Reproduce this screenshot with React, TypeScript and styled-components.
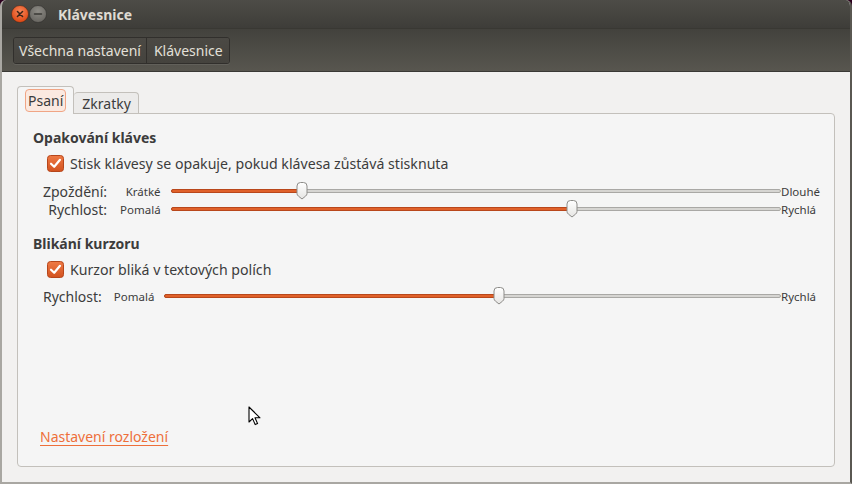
import React from "react"
import styled, { createGlobalStyle } from "styled-components"

const Global = createGlobalStyle`
  html, body { margin: 0; padding: 0; background: #2c001e; }
  body { font-family: "Noto Sans", "Open Sans", sans-serif; }
`

const Window = styled.div`
  position: relative;
  width: 852px;
  height: 484px;
  display: flex;
  flex-direction: column;
  background: #f2f1f0;
  border-radius: 6px 6px 0 0;
  overflow: hidden;
  box-sizing: border-box;
  border-left: 2px solid #a9a7a2;
  border-right: 2px solid #5a5852;
  border-bottom: 2px solid #a9a7a2;
`

const TitleBar = styled.div`
  height: 28px;
  display: flex;
  align-items: center;
  padding-left: 9px;
  background: linear-gradient(#4d4c47, #3e3d39);
  border-bottom: 1px solid #393833;
`

const WinButton = styled.svg`
  width: 18px;
  height: 18px;
  display: block;
`

const Title = styled.span`
  margin-left: 11px;
  color: #dfdbd2;
  font-size: 14px;
  font-weight: 700;
`

const Toolbar = styled.div`
  height: 42px;
  display: flex;
  align-items: center;
  padding-left: 11px;
  background: linear-gradient(#43423d, #58564f);
  border-bottom: 1px solid #3a3935;
`

const Crumbs = styled.div`
  display: flex;
  height: 25px;
  border: 1px solid #312f2c;
  border-radius: 3px;
  overflow: hidden;
  box-shadow: 0 1px 0 rgba(255, 255, 255, 0.08);
`

const Crumb = styled.div<{ $last?: boolean }>`
  display: flex;
  align-items: center;
  padding: ${p => (p.$last ? "0 6px 0 7px" : "0 5px")};
  color: #e3e0d9;
  font-size: 14px;
  background: linear-gradient(#4b4944, #45433e);
  border-right: ${p => (p.$last ? "none" : "1px solid #312f2c")};
`

const Content = styled.div`
  flex: 1;
  display: flex;
  flex-direction: column;
  padding: 14px 15px 15px 15px;
`

const Tabs = styled.div`
  display: flex;
  align-items: flex-end;
  height: 27px;
`

const Tab = styled.div<{ $active?: boolean }>`
  box-sizing: border-box;
  display: flex;
  align-items: center;
  font-size: 14px;
  color: #3c3c3c;
  border: 1px solid #c3c0bb;
  border-bottom: none;
  border-radius: 4px 4px 0 0;
  margin-bottom: ${p => (p.$active ? "-1px" : "0")};
  height: ${p => (p.$active ? "28px" : "21px")};
  padding: ${p => (p.$active ? "0 7px" : "0 7px 0 8px")};
  background: ${p => (p.$active ? "#f5f5f5" : "#ecebea")};
  border-left: ${p => (p.$active ? "1px solid #c3c0bb" : "none")};
  position: relative;
  z-index: ${p => (p.$active ? 1 : 0)};
`

const Focus = styled.span`
  display: inline-flex;
  align-items: center;
  height: 21px;
  padding: 0 2px;
  border: 1px solid #f0a585;
  border-radius: 4px;
  background: #fbe9e0;
`

const Panel = styled.div`
  flex: 1;
  background: #f5f5f5;
  border: 1px solid #c3c0bb;
  border-radius: 0 4px 4px 4px;
  padding: 15px 13px 14px 15px;
  display: flex;
  flex-direction: column;
  color: #3c3c3c;
`

const Heading = styled.div<{ $top?: number }>`
  font-size: 14px;
  font-weight: 700;
  margin-top: ${p => p.$top ?? 0}px;
  height: 18px;
  line-height: 18px;
`

const CheckRow = styled.label`
  display: flex;
  align-items: center;
  gap: 6px;
  margin: 6px 0 0 14px;
  font-size: 14.15px;
  height: 20px;
`

const SliderGrid = styled.div<{ $top: number }>`
  display: grid;
  grid-template-columns: auto auto 1fr 40px;
  grid-auto-rows: 18px;
  align-items: center;
  margin: ${p => p.$top}px 0 0 10px;
`

const RowLabel = styled.span<{ $gap?: number }>`
  font-size: 14px;
  text-align: right;
  padding-right: ${p => p.$gap ?? 13}px;
`

const MinLabel = styled.span`
  font-size: 11.5px;
  text-align: right;
  padding-right: 10px;
`

const MaxLabel = styled.span`
  font-size: 11.5px;
  white-space: nowrap;
`

const Track = styled.div`
  position: relative;
  height: 4px;
  border-radius: 2px;
  background: #d6d5d2;
  border: 1px solid #a9a8a5;
  box-sizing: border-box;
`

const Fill = styled.div`
  position: absolute;
  left: -1px;
  top: -1px;
  bottom: -1px;
  border-radius: 2px;
  background: #e0612a;
  border: 1px solid #b9471b;
  box-sizing: border-box;
`

const Thumb = styled.svg`
  position: absolute;
  top: -8px;
  width: 13px;
  height: 18px;
  transform: translateX(-50%);
`

const LinkText = styled.a`
  margin-top: auto;
  margin-left: 7px;
  margin-bottom: 6px;
  font-size: 14px;
  color: #ee6f3a;
  text-decoration: underline;
  text-underline-offset: 3px;
  align-self: flex-start;
`

const Pointer = styled.svg`
  position: absolute;
  left: 246px;
  top: 406px;
  width: 14px;
  height: 21px;
`

function Slider({ value }: { value: number }) {
  return (
    <Track>
      <Fill style={{ width: `calc(${value * 100}% + 2px)` }} />
      <Thumb viewBox="0 0 13 18" style={{ left: `${value * 100}%` }}>
        <defs>
          <linearGradient id="tg" x1="0" y1="0" x2="0" y2="1">
            <stop offset="0" stopColor="#ffffff" />
            <stop offset="1" stopColor="#e6e5e3" />
          </linearGradient>
        </defs>
        <path
          d="M1.5 4 Q1.5 0.5 5 0.5 L8 0.5 Q11.5 0.5 11.5 4 L11.5 11.5 Q11.5 13 10 14.2 L6.5 17 L3 14.2 Q1.5 13 1.5 11.5 Z"
          fill="url(#tg)"
          stroke="#8d8c89"
          strokeWidth="1"
        />
      </Thumb>
    </Track>
  )
}

function CheckBox() {
  return (
    <svg width="17" height="17" viewBox="0 0 17 17">
      <defs>
        <linearGradient id="cb" x1="0" y1="0" x2="0" y2="1">
          <stop offset="0" stopColor="#ef7a45" />
          <stop offset="1" stopColor="#d2521f" />
        </linearGradient>
      </defs>
      <rect x="0.5" y="0.5" width="16" height="16" rx="3" fill="url(#cb)" stroke="#b6461b" />
      <path d="M4 8.7 L7.2 11.8 L13 4.8" fill="none" stroke="#fff" strokeWidth="2.2" strokeLinecap="round" strokeLinejoin="round" />
    </svg>
  )
}

export default function App() {
  return (
    <Window>
      <Global />
      <TitleBar>
        <WinButton viewBox="0 0 19 19">
          <defs>
            <radialGradient id="cl" cx="0.5" cy="0.35" r="0.6">
              <stop offset="0" stopColor="#f8875a" />
              <stop offset="1" stopColor="#df4a16" />
            </radialGradient>
          </defs>
          <circle cx="9.5" cy="9.5" r="9" fill="url(#cl)" stroke="#3a2a22" strokeWidth="0.6" />
          <path d="M6.8 6.8 L12.2 12.2 M12.2 6.8 L6.8 12.2" stroke="#3b2418" strokeWidth="1.6" strokeLinecap="round" />
        </WinButton>
        <WinButton viewBox="0 0 19 19">
          <defs>
            <radialGradient id="mn" cx="0.5" cy="0.35" r="0.6">
              <stop offset="0" stopColor="#8e8c86" />
              <stop offset="1" stopColor="#6a6863" />
            </radialGradient>
          </defs>
          <circle cx="9.5" cy="9.5" r="9" fill="url(#mn)" stroke="#2e2d2a" strokeWidth="0.6" />
          <path d="M5.8 9.5 L13.2 9.5" stroke="#3a3935" strokeWidth="1.6" strokeLinecap="round" />
        </WinButton>
        <Title>Klávesnice</Title>
      </TitleBar>

      <Toolbar>
        <Crumbs>
          <Crumb>Všechna nastavení</Crumb>
          <Crumb $last>Klávesnice</Crumb>
        </Crumbs>
      </Toolbar>

      <Content>
        <Tabs>
          <Tab $active>
            <Focus>Psaní</Focus>
          </Tab>
          <Tab>Zkratky</Tab>
        </Tabs>
        <Panel>
          <Heading>Opakování kláves</Heading>
          <CheckRow>
            <CheckBox />
            Stisk klávesy se opakuje, pokud klávesa zůstává stisknuta
          </CheckRow>
          <SliderGrid $top={9}>
            <RowLabel>Zpoždění:</RowLabel>
            <MinLabel>Krátké</MinLabel>
            <Slider value={0.215} />
            <MaxLabel>Dlouhé</MaxLabel>
            <RowLabel>Rychlost:</RowLabel>
            <MinLabel>Pomalá</MinLabel>
            <Slider value={0.658} />
            <MaxLabel>Rychlá</MaxLabel>
          </SliderGrid>

          <Heading $top={17}>Blikání kurzoru</Heading>
          <CheckRow>
            <CheckBox />
            Kurzor bliká v textových polích
          </CheckRow>
          <SliderGrid $top={8}>
            <RowLabel $gap={12}>Rychlost:</RowLabel>
            <MinLabel>Pomalá</MinLabel>
            <Slider value={0.542} />
            <MaxLabel>Rychlá</MaxLabel>
          </SliderGrid>

          <LinkText href="#">Nastavení rozložení</LinkText>
        </Panel>
      </Content>

      <Pointer viewBox="0 0 14 21">
        <path d="M1 1 L1 16 L4.6 12.6 L7.2 18.6 L9.6 17.6 L7 11.8 L12 11.8 Z" fill="#fff" stroke="#000" strokeWidth="1.1" strokeLinejoin="round" />
      </Pointer>
    </Window>
  )
}
